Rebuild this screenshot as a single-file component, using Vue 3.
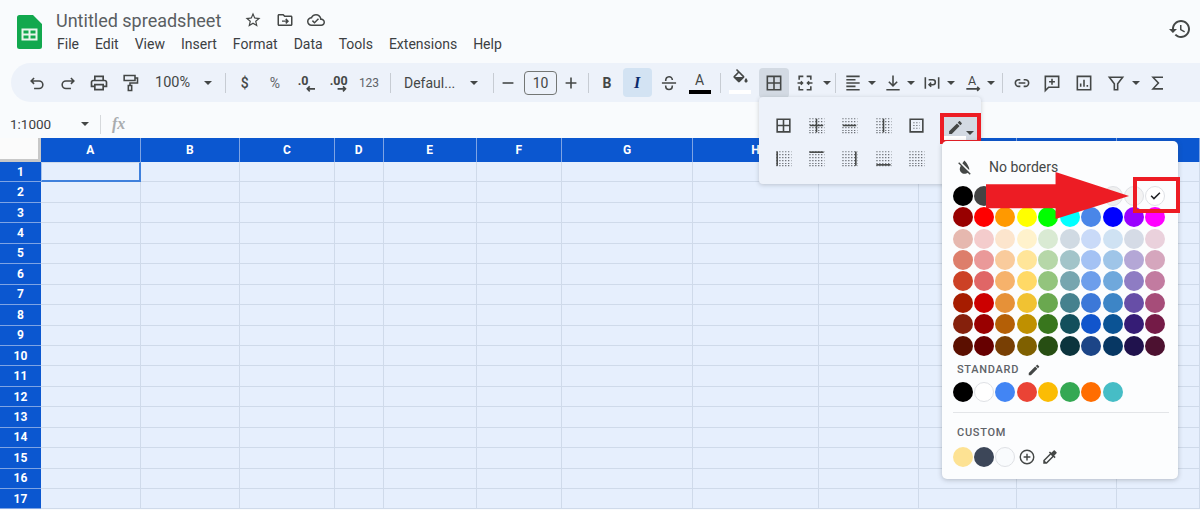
<script setup>
const colWidths = [99.5, 99.5, 95, 48.5, 93, 85.5, 131, 126, 100, 98, 100, 83]
const colNames = ['A','B','C','D','E','F','G','H','I','J','K','L']
const rows = Array.from({ length: 17 }, (_, i) => i + 1)
const gridCols = '41px ' + colWidths.map(w => w + 'px').join(' ')
const menu = ['File','Edit','View','Insert','Format','Data','Tools','Extensions','Help']

const tb = [
  { w: 31, s: 'M8.5 6 5 9.5l3.5 3.5M5 9.5h9.5a4.5 4.500 0 0 1 0 9H8.5' },
  { w: 31, s: 'M15.500 6 19 9.500 15.500 13M19 9.500H9.500a4.500 4.500 0 0 0 0 9h6' },
  { w: 31, f: 'M19 8h-1V3H6v5H5c-1.66 0-3 1.34-3 3v6h4v4h12v-4h4v-6c0-1.66-1.34-3-3-3zM8 5h8v3H8V5zm8 12v2H8v-4h8v2zm2-2v-2H6v2H4v-4c0-.55.45-1 1-1h14c.55 0 1 .45 1 1v4h-2z' },
  { w: 31, s: 'M5 3h13v6H5zM18 6h3v6h-9v3M10 15h4v6h-4z' },
  { kind: 'drop', w: 74.5, label: '100%', pl: 9.5, pr: 8, fs: 14.5 },
  { kind: 'sep', w: 10 },
  { w: 29.5, t: '$', ts: 14, tw: 500 },
  { w: 31, t: '%', ts: 14 },
  { w: 31, t: '.0', ts: 12.5, tw: 700, tx: 2, ty: 14.5, s: 'M22.800 19H13M16.500 16l-3 3 3 3' },
  { w: 32, t: '.00', ts: 12.5, tw: 700, tx: 2, ty: 14.5, s: 'M11.500 19H21M18 16l3 3-3 3' },
  { w: 31, t: '123', ts: 12 , wide: true },
  { kind: 'sep', w: 11 },
  { kind: 'drop', w: 90, label: 'Defaul...', pl: 8.5, pr: 7.5, fs: 14 },
  { kind: 'sep', w: 15 },
  { w: 15, s: 'M5.5 12h13' },
  { kind: 'size', w: 47 },
  { w: 17, s: 'M12 5.5v13M5.5 12h13' },
  { kind: 'sep', w: 17 },
  { w: 21, t: 'B', ts: 14, tw: 700 },
  { kind: 'italic', w: 29 },
  { w: 30, s: 'M3.5 12h17M8 9.5c0-6.500 8-6.500 8-1M8 15c0 6.500 8 6.500 8 0' },
  { kind: 'color', w: 32, t: 'A' },
  { kind: 'sep', w: 10 },
  { kind: 'fill', w: 29, f: 'M16.56 8.94L7.62 0 6.21 1.41l2.38 2.38-5.15 5.15c-.59.59-.59 1.54 0 2.12l5.5 5.5c.29.29.68.44 1.06.44s.77-.15 1.06-.44l5.5-5.5c.59-.58.59-1.53 0-2.12zM5.21 10L10 5.21 14.79 10H5.21zM19 11.5s-2 2.17-2 3.5c0 1.1.9 2 2 2s2-.9 2-2c0-1.33-2-3.500-2-3.500z' },
  { kind: 'active', w: 30, s: 'M4 4h16v16H4zM12 4v16M4 12h16' },
  { kind: 'split', pl: 6, gap: 8, s: 'M10 4H5v4M5 16v4h5M14 4h5v4M19 16v4h-5M3 12h6M21 12h-6M7 10l2 2-2 2M17 10l-2 2 2 2' },
  { kind: 'sep', w: 10 },
  { kind: 'split', pl: 2, gap: 5, s: 'M4 4h16M4 8h11M4 12h16M4 16h11M4 20h16' },
  { kind: 'split', pl: 7, gap: 4, s: 'M12 3v12M7 10.500l5 5 5-5M4 20h16' },
  { kind: 'split', pl: 7, gap: 5, s: 'M4 5v14M20 5v14M8 8h5a3 3 0 0 1 0 6H9M11 11.500l-2.500 2.500 2.500 2.500' },
  { kind: 'split', pl: 8, gap: 4, t: 'A', ts: 15, tx: 11, ty: 14, s: 'M4 19h15M17 16.500l2.500 2.500-2.500 2.500' },
  { kind: 'sep', w: 16 },
  { w: 22, s: 'M10 8H8a4 4 0 0 0 0 8h2M14 8h2a4 4 0 0 1 0 8h-2M8 12h8' },
  { w: 38, s: 'M4 4h16v13H8l-4 4zM12 7v7M8.500 10.500h7' },
  { w: 26, s: 'M4 4h16v16H4zM8 16.500v-4M12 16.500V8M16 16.500v-2' },
  { kind: 'split', pl: 9, gap: 6, s: 'M4 5h16l-6 8v7h-4v-7z' },
  { w: 36, s: 'M18 5H6l6.500 7L6 19h12' }
]

const dots = [3.5, 7.2, 10.9, 14.6, 18.3, 21].map(y => `M3 ${y}h19`).join('')
const innerDots = 'M8 8.500h8M8 12h8M8 15.500h8'
const borders = [
  { s: 'M4 4h16v16H4zM12 4v16M4 12h16' },
  { s: 'M12 3.500v17M3.500 12h17', d: dots },
  { s: 'M3.500 12h17', d: dots },
  { s: 'M12 3.500v17', d: dots },
  { s: 'M4 4h16v16H4z', d: innerDots },
  { s: 'M4 3v18', d: dots },
  { s: 'M3 4h18', d: dots },
  { s: 'M20 3v18', d: dots },
  { s: 'M3 20h18', d: dots },
  { d: dots }
]

const palette = [
  '#000000','#434343','#666666','#999999','#b7b7b7','#cccccc','#d9d9d9','#efefef','#f3f3f3','#ffffff',
  '#980000','#ff0000','#ff9900','#ffff00','#00ff00','#00ffff','#4a86e8','#0000ff','#9900ff','#ff00ff',
  '#e6b8af','#f4cccc','#fce5cd','#fff2cc','#d9ead3','#d0dae3','#c9daf8','#cfe2f3','#d5dbe6','#ead1dc',
  '#dd7e6b','#ea9999','#f9cb9c','#ffe599','#b6d7a8','#a2c4c9','#a4c2f4','#9fc5e8','#b4a7d6','#d5a6bd',
  '#cc4125','#e06666','#f6b26b','#ffd966','#93c47d','#76a5af','#6d9eeb','#6fa8dc','#8e7cc3','#c27ba0',
  '#a61c00','#cc0000','#e69138','#f1c232','#6aa84f','#45818e','#3c78d8','#3d85c6','#674ea7','#a64d79',
  '#85200c','#990000','#b45f06','#bf9000','#38761d','#134f5c','#1155cc','#0b5394','#351c75','#741b47',
  '#5b0f00','#660000','#783f04','#7f6000','#274e13','#0c343d','#1c4587','#073763','#20124d','#4c1130'
]
const standard = ['#000000','#ffffff','#4285f4','#ea4335','#fbbc04','#34a853','#ff6d01','#46bdc6']
const custom = ['#fde293','#3c4658','#f9fbfd']
const isLight = c => ['#ffffff','#f3f3f3','#efefef','#f9fbfd'].includes(c)

const pencil = 'M3 17.25V21h3.75L17.81 9.94l-3.75-3.75L3 17.25zM20.71 7.04c.39-.39.39-1.02 0-1.41l-2.34-2.34c-.39-.39-1.02-.39-1.41 0l-1.83 1.83 3.75 3.75 1.83-1.83z'
</script>

<template>
  <div class="page">
    <header class="top">
      <svg class="logo" viewBox="0 0 25 34">
        <path class="logo-body" d="M2.500 0H16l9 9v22.500a2.500 2.500 0 0 1-2.500 2.500h-20A2.500 2.500 0 0 1 0 31.500v-29A2.500 2.500 0 0 1 2.500 0z" />
        <path class="logo-grid" d="M5.500 14.500h14v10h-14zM12.500 14.500v10M5.500 19.500h14" />
      </svg>
      <div class="head-col">
        <div class="title-row">
          <span class="title">Untitled spreadsheet</span>
          <svg class="t-icon first" viewBox="0 0 24 24"><path class="fl" d="M22 9.240l-7.190-.620L12 2 9.190 8.630 2 9.240l5.460 4.730L5.820 21 12 17.270 18.180 21l-1.630-7.030L22 9.240zM12 15.400l-3.760 2.270 1-4.280-3.320-2.880 4.380-.380L12 6.100l1.710 4.040 4.380.380-3.320 2.880 1 4.280L12 15.400z" /></svg>
          <svg class="t-icon" viewBox="0 0 24 24"><path class="fl" d="M20 6h-8l-2-2H4c-1.100 0-2 .9-2 2v12c0 1.100.9 2 2 2h16c1.100 0 2-.9 2-2V8c0-1.100-.9-2-2-2zm0 12H4V6h5.170l2 2H20v10z" /><path class="st" d="M8 13.500h8M13 10.500l3 3-3 3" /></svg>
          <svg class="t-icon" viewBox="0 0 24 24"><path class="fl" d="M19.350 10.040C18.670 6.590 15.640 4 12 4 9.110 4 6.600 5.640 5.350 8.040 2.340 8.360 0 10.910 0 14c0 3.310 2.690 6 6 6h13c2.760 0 5-2.240 5-5 0-2.640-2.050-4.780-4.650-4.960zM19 18H6c-2.210 0-4-1.790-4-4s1.790-4 4-4h.71C7.370 7.690 9.480 6 12 6c3.040 0 5.500 2.460 5.500 5.500v.5H19c1.660 0 3 1.340 3 3s-1.340 3-3 3zm-9-3.820l-2.090-2.090L6.500 13.500 10 17l6.010-6.010-1.410-1.410z" /></svg>
        </div>
        <nav class="menu"><span v-for="m in menu" :key="m">{{ m }}</span></nav>
      </div>
      <svg class="history" viewBox="0 0 24 24"><path class="hist" d="M13 3c-4.970 0-9 4.030-9 9H1l3.890 3.890.07.140L9 12H6c0-3.870 3.130-7 7-7s7 3.130 7 7-3.130 7-7 7c-1.930 0-3.680-.79-4.940-2.060l-1.420 1.420C8.270 19.990 10.510 21 13 21c4.970 0 9-4.030 9-9s-4.030-9-9-9zm-1 5v5l4.280 2.540.72-1.210-3.500-2.080V8H12z" /></svg>
    </header>

    <div class="toolbar">
      <template v-for="(it, i) in tb" :key="i">
        <span v-if="it.kind === 'sep'" class="sep-slot" :style="{ width: it.w + 'px' }"><i class="sep"></i></span>
        <span v-else-if="it.kind === 'drop'" class="drop" :style="{ width: it.w + 'px', paddingLeft: it.pl + 'px', paddingRight: it.pr + 'px', fontSize: it.fs + 'px' }">
          <span>{{ it.label }}</span><i class="caret"></i>
        </span>
        <span v-else-if="it.kind === 'size'" class="size-slot" :style="{ width: it.w + 'px' }"><span class="size">10</span></span>
        <span v-else-if="it.kind === 'italic'" class="italic-slot"><span class="italic">I</span></span>
        <span v-else-if="it.kind === 'color'" class="slot stacked" :style="{ width: it.w + 'px' }">
          <span class="color-a">A</span><i class="bar black"></i>
        </span>
        <span v-else-if="it.kind === 'fill'" class="slot stacked" :style="{ width: it.w + 'px' }">
          <svg class="icon fill-ic" viewBox="0 0 24 24"><path class="fl" :d="it.f" /></svg><i class="bar white"></i>
        </span>
        <span v-else-if="it.kind === 'split'" class="split" :style="{ paddingLeft: it.pl + 'px', gap: it.gap + 'px' }">
          <svg class="icon" viewBox="0 0 24 24">
            <text v-if="it.t" class="svg-t" :x="it.tx" :y="it.ty" :font-size="it.ts" text-anchor="middle">{{ it.t }}</text>
            <path class="st" :d="it.s" />
          </svg>
          <i class="caret"></i>
        </span>
        <span v-else class="slot" :class="{ active: it.kind === 'active' }" :style="{ width: it.w + 'px' }">
          <svg v-if="it.s || it.f" class="icon" viewBox="0 0 24 24">
            <text v-if="it.t" class="svg-t" :x="it.tx" :y="it.ty" :font-size="it.ts * 1.2" :font-weight="it.tw">{{ it.t }}</text>
            <path v-if="it.s" class="st" :d="it.s" />
            <path v-if="it.f" class="fl" :d="it.f" />
          </svg>
          <span v-else class="tb-text" :class="{ bold: it.tw === 700, mid: it.tw === 500, narrow: it.wide }">{{ it.t }}</span>
        </span>
      </template>
    </div>

    <div class="formula">
      <span class="name">1:1000</span>
      <i class="caret name-caret"></i>
      <i class="f-sep"></i>
      <span class="fx">fx</span>
    </div>

    <div class="sheet" :style="{ gridTemplateColumns: gridCols }">
      <div class="corner"></div>
      <div v-for="c in colNames" :key="c" class="col-h">{{ c }}</div>
      <template v-for="r in rows" :key="r">
        <div class="row-h">{{ r }}</div>
        <div v-for="(c, ci) in colNames" :key="c" class="cell" :class="{ sel: r === 1 && ci === 0 }"></div>
      </template>
    </div>

    <div class="border-pop">
      <div class="border-grid">
        <span v-for="(b, i) in borders" :key="i" class="b-cell">
          <svg class="icon b-ic" viewBox="0 0 24 24">
            <path v-if="b.d" class="dots" :d="b.d" />
            <path v-if="b.s" class="st solid" :d="b.s" />
          </svg>
        </span>
      </div>
      <div class="pen-btn">
        <svg class="pen-ic" viewBox="0 0 24 24"><path class="fl" :d="pencil" /></svg>
        <i class="caret pen-caret"></i>
        <i class="pen-bar"></i>
      </div>
    </div>

    <div class="color-pop">
      <div class="no-borders">
        <svg class="nb-ic" viewBox="0 0 24 24"><path class="fl" d="M18 14c0-4-6-10.800-6-10.800s-1.330 1.510-2.730 3.520l8.590 8.590c.09-.42.14-.86.14-1.310zm-.88 3.120L12.500 12.500 5.270 5.270 4 6.540l3.320 3.320C6.550 11.320 6 12.790 6 14c0 3.310 2.690 6 6 6 1.520 0 2.900-.57 3.960-1.500l2.630 2.630 1.270-1.270-2.740-2.740z" /></svg>
        <span>No borders</span>
      </div>
      <div class="swatches">
        <span v-for="(c, i) in palette" :key="i" class="sw" :class="{ light: isLight(c) }" :style="{ background: c }">
          <svg v-if="i === 9" class="check" viewBox="0 0 24 24"><path class="check-p" d="M5 12.500l4.500 4.500L19 7.500" /></svg>
        </span>
      </div>
      <div class="label std">STANDARD
        <svg class="lab-pen" viewBox="0 0 24 24"><path class="fl" :d="pencil" /></svg>
      </div>
      <div class="sw-row std-row">
        <span v-for="c in standard" :key="c" class="sw" :class="{ light: isLight(c) }" :style="{ background: c }"></span>
      </div>
      <div class="divider"></div>
      <div class="label cus">CUSTOM</div>
      <div class="sw-row cus-row">
        <span v-for="c in custom" :key="c" class="sw" :class="{ light: isLight(c) }" :style="{ background: c }"></span>
        <svg class="mini" viewBox="0 0 24 24"><circle class="st" cx="12" cy="12" r="9" /><path class="st" d="M12 7.500v9M7.500 12h9" /></svg>
        <svg class="mini" viewBox="0 0 24 24"><path class="fl" d="M20.710 5.630l-2.340-2.340c-.39-.39-1.020-.39-1.410 0l-3.120 3.120-1.930-1.910-1.410 1.410 1.420 1.420L3 16.250V21h4.750l8.920-8.920 1.420 1.420 1.410-1.410-1.920-1.920 3.120-3.120c.4-.4.4-1.030.01-1.420zM6.920 19L5 17.080l8.060-8.060 1.920 1.920L6.920 19z" /></svg>
      </div>
    </div>

    <svg class="arrow" viewBox="0 0 147 50"><polygon points="0,12.500 71,12.500 71,0 146,24.500 71,48 71,37 0,37" /></svg>
    <div class="red-box"></div>
  </div>
</template>

<style scoped>
.page { position: relative; width: 1200px; height: 510px; overflow: hidden; background: #f9fbfd; font-family: Roboto, "Liberation Sans", sans-serif; color: #444746; }
.top { display: flex; height: 63px; padding-left: 17px; box-sizing: border-box; }
.logo { width: 25px; height: 34px; margin-top: 15px; flex: none; }
.logo-body { fill: #12a84e; }
.logo-grid { fill: none; stroke: #e8f5ec; stroke-width: 2; }
.head-col { margin-left: 14px; display: flex; flex-direction: column; }
.title-row { display: flex; align-items: center; height: 24px; margin-top: 8px; }
.title { font-size: 18px; color: #5a5e62; white-space: nowrap; width: 166px; }
.t-icon { width: 18px; height: 18px; margin-right: 13.500px; flex: none; }
.t-icon.first { margin-left: 22px; }
.menu { display: flex; gap: 16px; font-size: 14px; color: #3c4043; margin-top: 3px; margin-left: 1px; line-height: 18px; }
.history { width: 24px; height: 24px; position: absolute; left: 1168px; top: 17px; }
.hist { fill: #444746; }
.st { fill: none; stroke: #444746; stroke-width: 1.900; }
.fl { fill: #444746; }
.toolbar { margin-left: 11px; height: 39px; padding-left: 10.500px; background: #edf2fa; border-radius: 20px 0 0 20px; display: flex; align-items: center; }
.slot { display: flex; justify-content: center; align-items: center; flex: none; height: 30px; }
.slot.active { background: #d3dae3; border-radius: 4px; margin-left: 4px; }
.icon { width: 20px; height: 20px; flex: none; overflow: visible; }
.svg-t { fill: #444746; font-family: Roboto, sans-serif; }
.tb-text { font-size: 14px; color: #5f6368; }
.tb-text.bold { font-weight: 700; color: #444746; }
.tb-text.mid { font-weight: 500; color: #444746; }
.tb-text.narrow { font-size: 12px; }
.sep-slot { display: flex; justify-content: center; flex: none; }
.sep { width: 1px; height: 20px; background: #c7ccd3; }
.drop { display: flex; align-items: center; justify-content: space-between; box-sizing: border-box; flex: none; color: #444746; }
.caret { width: 0; height: 0; border-left: 4px solid transparent; border-right: 4px solid transparent; border-top: 4px solid #444746; flex: none; display: block; }
.size-slot { flex: none; padding-left: 8.500px; box-sizing: border-box; }
.size { display: block; width: 33px; height: 24px; line-height: 22px; box-sizing: border-box; text-align: center; border: 1px solid #747775; border-radius: 4px; font-size: 14px; }
.italic-slot { flex: none; margin-left: 5px; margin-right: 2px; }
.italic { display: block; width: 29px; height: 29px; line-height: 29px; text-align: center; background: #d3e3f3; border-radius: 4px; font: italic 700 16px/29px "Liberation Serif", serif; color: #0b2a6b; }
.stacked { flex-direction: column; position: relative; }
.color-a { font-size: 14px; line-height: 16px; margin-top: 0; }
.bar { display: block; width: 22px; height: 4px; margin-top: 2px; }
.bar.black { background: #000; }
.bar.white { background: #fff; }
.fill-ic { width: 19px; height: 19px; margin-top: -2px; }
.split { display: flex; align-items: center; flex: none; }
.formula { display: flex; align-items: center; height: 36px; padding-top: 8px; box-sizing: border-box; }
.name { font-size: 13.500px; margin-left: 10px; width: 71px; color: #3c4043; }
.name-caret { margin-left: 0; }
.f-sep { width: 1px; height: 19px; background: #d6d9dc; margin-left: 11px; }
.fx { font: italic 700 16px "Liberation Serif", serif; color: #a9acaf; margin-left: 11px; }
.sheet { display: grid; grid-auto-rows: 20.450px; grid-template-rows: 24px; height: 372px; overflow: hidden; }
.corner { background: #fbfbfb; border-right: 3px solid #c8c8c8; border-bottom: 3px solid #c8c8c8; box-sizing: border-box; }
.col-h { background: #0b57d0; color: #fff; font-size: 12px; font-weight: 700; display: flex; align-items: center; justify-content: center; border-right: 1px solid #7ea4e4; box-sizing: border-box; }
.row-h { background: #0b57d0; color: #fff; font-size: 12px; font-weight: 700; display: flex; align-items: center; justify-content: center; border-bottom: 1px solid #7ea4e4; box-sizing: border-box; }
.cell { background: #e6effd; border-right: 1px solid #cfdaea; border-bottom: 1px solid #cfdaea; box-sizing: border-box; }
.cell.sel { border: 1px solid #cfdaea; border-right: 2px solid #3f80dc; border-bottom: 2px solid #3f80dc; border-left: 1px solid #a8c4ee; }
.border-pop { position: absolute; left: 759px; top: 97px; width: 222px; height: 87px; box-sizing: border-box; padding: 12px 0 0 7.500px; background: #edf2fa; border-radius: 4px; box-shadow: 0 1px 4px rgba(60,64,67,.25); display: flex; align-items: flex-start; }
.border-grid { display: grid; grid-template-columns: repeat(5, 33.300px); grid-auto-rows: 33px; }
.b-cell { display: flex; align-items: center; justify-content: center; }
.b-ic { width: 19px; height: 19px; }
.dots { fill: none; stroke: #5f6368; stroke-width: 1.500; stroke-dasharray: 1.500 2.200; }
.solid { stroke-width: 2; }
.pen-btn { position: relative; width: 41px; height: 31px; margin: 3.500px 0 0 7px; box-sizing: border-box; border: 4px solid #ed1c24; background: #d3dae3; }
.pen-ic { position: absolute; left: 3px; top: 2px; width: 17px; height: 17px; }
.pen-caret { position: absolute; left: 22px; top: 14px; }
.pen-bar { position: absolute; left: 0; bottom: 0; width: 22px; height: 4px; background: #fff; }
.color-pop { position: absolute; left: 941.500px; top: 141px; width: 236px; height: 338px; box-sizing: border-box; padding: 14px 0 0 11px; background: #fcfdfe; border-radius: 5px; box-shadow: 0 1px 5px rgba(60,64,67,.3); }
.no-borders { display: flex; align-items: center; height: 24px; font-size: 14px; color: #444746; margin-bottom: 6.700px; }
.nb-ic { width: 19px; height: 19px; margin-left: 2px; margin-right: 15.500px; }
.swatches { display: grid; grid-template-columns: repeat(10, 20px); gap: 1.450px; }
.sw { display: flex; align-items: center; justify-content: center; width: 20px; height: 20px; border-radius: 50%; box-sizing: border-box; flex: none; }
.sw.light { border: 1px solid #dfe1e5; }
.check { width: 15px; height: 15px; }
.check-p { fill: none; stroke: #202124; stroke-width: 2.400; }
.label { font-size: 11px; font-weight: 500; letter-spacing: .7px; color: #5f6368; margin-left: 4.500px; height: 16px; line-height: 16px; display: flex; align-items: center; }
.label.std { margin-top: 6.500px; }
.lab-pen { width: 14px; height: 14px; margin-left: 8px; }
.sw-row { display: flex; gap: 1.450px; align-items: center; }
.std-row { margin-top: 4px; }
.divider { height: 1px; width: 216px; background: #e3e5e8; margin-top: 10px; }
.label.cus { margin-top: 12px; }
.cus-row { margin-top: 5.700px; }
.mini { width: 18px; height: 18px; margin-left: 1.500px; margin-right: 1.500px; }
.arrow { position: absolute; left: 985px; top: 172px; width: 146px; height: 49px; }
.arrow polygon { fill: #ed1c24; }
.red-box { position: absolute; left: 1133px; top: 177px; width: 47px; height: 36px; box-sizing: border-box; border: 4px solid #ed1c24; }
</style>
